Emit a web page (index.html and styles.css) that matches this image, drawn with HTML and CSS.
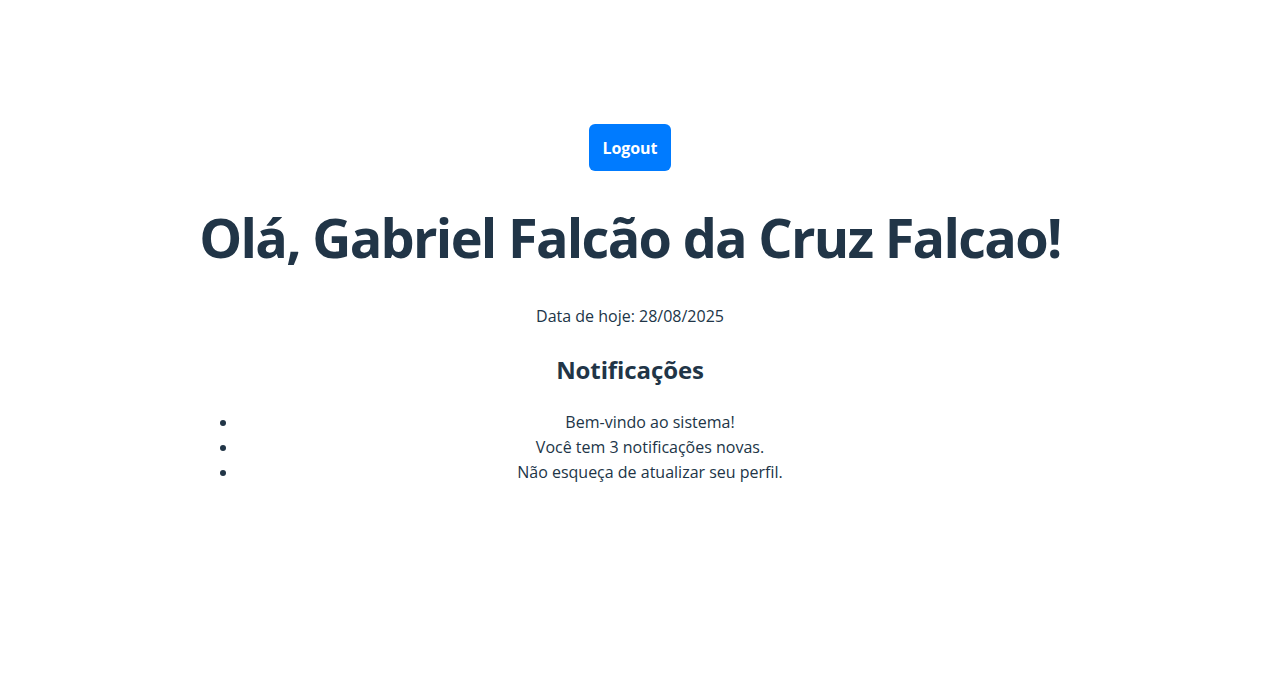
FILE: index.html
```html
<!DOCTYPE html>
<html lang="pt-BR">
<head>
<meta charset="utf-8">
<title>Dashboard</title>
<link rel="stylesheet" href="styles.css">
</head>
<body>
<main class="page">
  <button class="logout" type="button">Logout</button>
  <h1 class="title">Olá, Gabriel Falcão da Cruz Falcao!</h1>
  <p class="date">Data de hoje: 28/08/2025</p>
  <h2 class="subtitle">Notificações</h2>
  <ul class="notes">
    <li>Bem-vindo ao sistema!</li>
    <li>Você tem 3 notificações novas.</li>
    <li>Não esqueça de atualizar seu perfil.</li>
  </ul>
</main>
</body>
</html>
```

FILE: styles.css
```css
html, body {
  margin: 0;
  background: #ffffff;
}
body {
  padding-right: 20px;
  font-family: "Open Sans", "Noto Sans", sans-serif;
  color: #213547;
}
.page {
  width: 864px;
  margin: 0 auto;
  padding-top: 124px;
  text-align: center;
}
.logout {
  font-family: inherit;
  font-size: 16px;
  font-weight: 700;
  color: #ffffff;
  background: #007bff;
  border: none;
  border-radius: 6px;
  padding: 13px 14px 12px;
  line-height: 22px;
  letter-spacing: -0.1px;
  cursor: pointer;
}
.title {
  font-size: 54px;
  line-height: 62px;
  font-weight: 700;
  margin: 35px -150px 0;
  letter-spacing: -1.7px;
  white-space: nowrap;
}
.date {
  font-size: 16px;
  line-height: 22px;
  margin: 37px 0 0;
}
.subtitle {
  font-size: 24px;
  line-height: 30px;
  font-weight: 700;
  margin: 28px 0 0;
  letter-spacing: -0.1px;
}
.notes {
  margin: 25px 0 0;
  padding-left: 40px;
  font-size: 16px;
  line-height: 25px;
}
```
